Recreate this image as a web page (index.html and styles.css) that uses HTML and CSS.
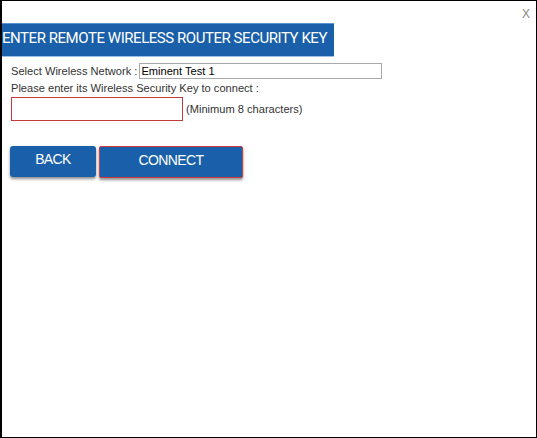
FILE: index.html
```html
<!DOCTYPE html>
<html>
<head>
<meta charset="utf-8">
<link rel="stylesheet" href="styles.css">
</head>
<body>
<div class="dialog">
  <div class="close">X</div>
  <div class="title">ENTER REMOTE WIRELESS ROUTER SECURITY KEY</div>
  <div class="form">
    <div class="row">
      <span class="label">Select Wireless Network :</span>
      <input class="ssid" type="text" value="Eminent Test 1">
    </div>
    <div class="row">
      <span class="label">Please enter its Wireless Security Key to connect :</span>
    </div>
    <div class="row keyrow">
      <input class="key" type="password">
      <span class="hint">(Minimum 8 characters)</span>
    </div>
  </div>
  <div class="buttons">
    <button class="btn back">BACK</button>
    <button class="btn connect">CONNECT</button>
  </div>
</div>
</body>
</html>
```
FILE: styles.css
```css
html, body {
  margin: 0;
  padding: 0;
  background: #fff;
}
.dialog {
  position: relative;
  box-sizing: border-box;
  width: 537px;
  height: 438px;
  border: 1px solid #000;
  border-left-width: 2px;
  font-family: "Liberation Sans", Arial, sans-serif;
  color: #333;
  padding-top: 22px;
}
.close {
  position: absolute;
  right: 6px;
  top: 6px;
  font-size: 12px;
  color: #888;
}
.title {
  width: 332px;
  height: 34px;
  box-sizing: border-box;
  background: #1a5fa9;
  border-top: 1px solid #5a95d0;
  border-bottom: 1px solid #9cc0e4;
  color: #fff;
  font-family: Roboto, "Liberation Sans", sans-serif;
  font-size: 15px;
  letter-spacing: -0.45px;
  line-height: 29px;
  padding-left: 0;
  white-space: nowrap;
  overflow: hidden;
}
.form {
  padding-left: 9px;
  padding-top: 6px;
  font-size: 11.1px;
}
.row {
  display: flex;
  align-items: center;
  height: 16px;
  margin-bottom: 1px;
}
.label {
  color: #333;
}
.ssid {
  box-sizing: border-box;
  width: 243px;
  height: 16px;
  margin: 0 0 0 2px;
  padding: 0 1px;
  border: 1px solid #a9a9a9;
  font-family: "Liberation Sans", Arial, sans-serif;
  font-size: 11.1px;
  color: #000;
  outline: none;
}
.keyrow {
  height: 24px;
  margin-top: 0;
}
.key {
  box-sizing: border-box;
  width: 172px;
  height: 24px;
  margin: 0;
  border: 1px solid #c43a3a;
  outline: none;
}
.hint {
  margin-left: 3px;
  color: #333;
}
.buttons {
  display: flex;
  gap: 3px;
  padding-left: 8px;
  margin-top: 25px;
}
.btn {
  box-sizing: border-box;
  height: 31px;
  margin: 0;
  background: #1a5fa9;
  color: #fff;
  border: none;
  border-radius: 3px;
  font-family: "Liberation Sans", Arial, sans-serif;
  font-size: 14px;
  letter-spacing: -0.6px;
  box-shadow: 0 2px 3px rgba(0,0,0,0.45);
  padding: 0 0 5px 0;
}
.back {
  width: 86px;
}
.connect {
  width: 144px;
  height: 32px;
  border: 1px solid #d33a3a;
  border-radius: 2px;
}
```
